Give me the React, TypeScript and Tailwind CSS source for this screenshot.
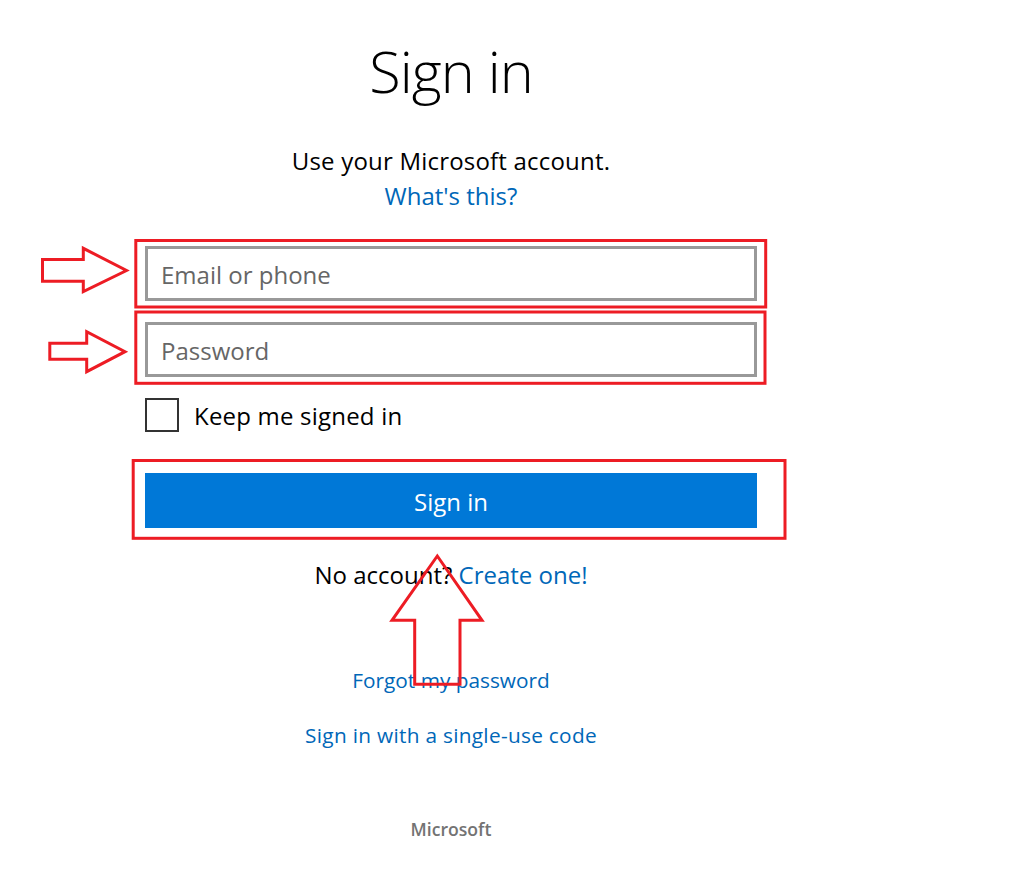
import React from "react";

const font = { fontFamily: '"Segoe UI", "Open Sans", "Noto Sans", sans-serif' };

function Annotations() {
  return (
    <svg
      className="pointer-events-none absolute left-0 top-0"
      width={1024}
      height={884}
      viewBox="0 0 1024 884"
      fill="none"
      stroke="#ed1c24"
      strokeWidth={3}
    >
      <rect x={135.8} y={240.5} width={629.9} height={66.5} />
      <rect x={135.8} y={312} width={629.2} height={71.3} />
      <rect x={133.2} y={460.5} width={651.8} height={77.8} />
      <polygon points="42.5,259.5 83.3,259.5 83.3,248.3 126.5,270.5 83.3,291.7 83.3,281.3 42.5,281.3" strokeLinejoin="miter" />
      <polygon points="49.8,343.2 86.7,343.2 86.7,331.7 125,351.7 86.7,371.7 86.7,359.2 49.8,359.2" strokeLinejoin="miter" />
      <polygon points="437.3,556 482,620.3 460,620.3 460,684.3 414.7,684.3 414.7,620.3 392,620.3" strokeLinejoin="miter" />
    </svg>
  );
}

export default function App() {
  return (
    <div className="relative h-[884px] w-[1024px] overflow-hidden bg-white" style={font}>
      <div className="ml-[145px] flex w-[612px] flex-col items-center">
        <h1 className="mt-[41px] h-[60px] text-[57.6px] font-light leading-[60px] tracking-[-1px] text-black">Sign in</h1>
        <p className="mt-[44px] text-[24px] leading-[32px] tracking-[0.2px] text-black">Use your Microsoft account.</p>
        <a className="mt-[3px] text-[24px] leading-[32px] text-[#0067b8]">What's this?</a>
        <div className="mt-[34px] flex h-[55px] w-full items-center border-[3px] border-[#999] bg-white pl-[13px] pt-[2px]">
          <span className="text-[24px] leading-[32px] text-[#666]">Email or phone</span>
        </div>
        <div className="mt-[21px] flex h-[55px] w-full items-center border-[3px] border-[#999] bg-white pl-[13px] pt-[2px]">
          <span className="text-[24px] leading-[32px] text-[#666]">Password</span>
        </div>
        <div className="mt-[21px] flex h-[34px] w-full items-center gap-[15px]">
          <div className="h-[34px] w-[34px] border-2 border-[#333]" />
          <span className="pt-[2px] text-[24px] leading-[34px] tracking-[0.2px] text-black">Keep me signed in</span>
        </div>
        <div className="mt-[41px] flex h-[55px] w-full items-center justify-center bg-[#0078d7] pt-[2px]">
          <span className="text-[24px] leading-[32px] text-white">Sign in</span>
        </div>
        <p className="mt-[31px] text-[24px] leading-[32px] text-black">
          No account? <span className="text-[#0067b8]">Create one!</span>
        </p>
        <a className="mt-[75px] text-[20.8px] leading-[28px] text-[#0067b8]">Forgot my password</a>
        <a className="mt-[27px] text-[20.8px] leading-[28px] tracking-[0.3px] text-[#0067b8]">Sign in with a single-use code</a>
        <p className="mt-[68px] text-[17.6px] font-semibold leading-[24px] text-[#737373]">Microsoft</p>
      </div>
      <Annotations />
    </div>
  );
}
